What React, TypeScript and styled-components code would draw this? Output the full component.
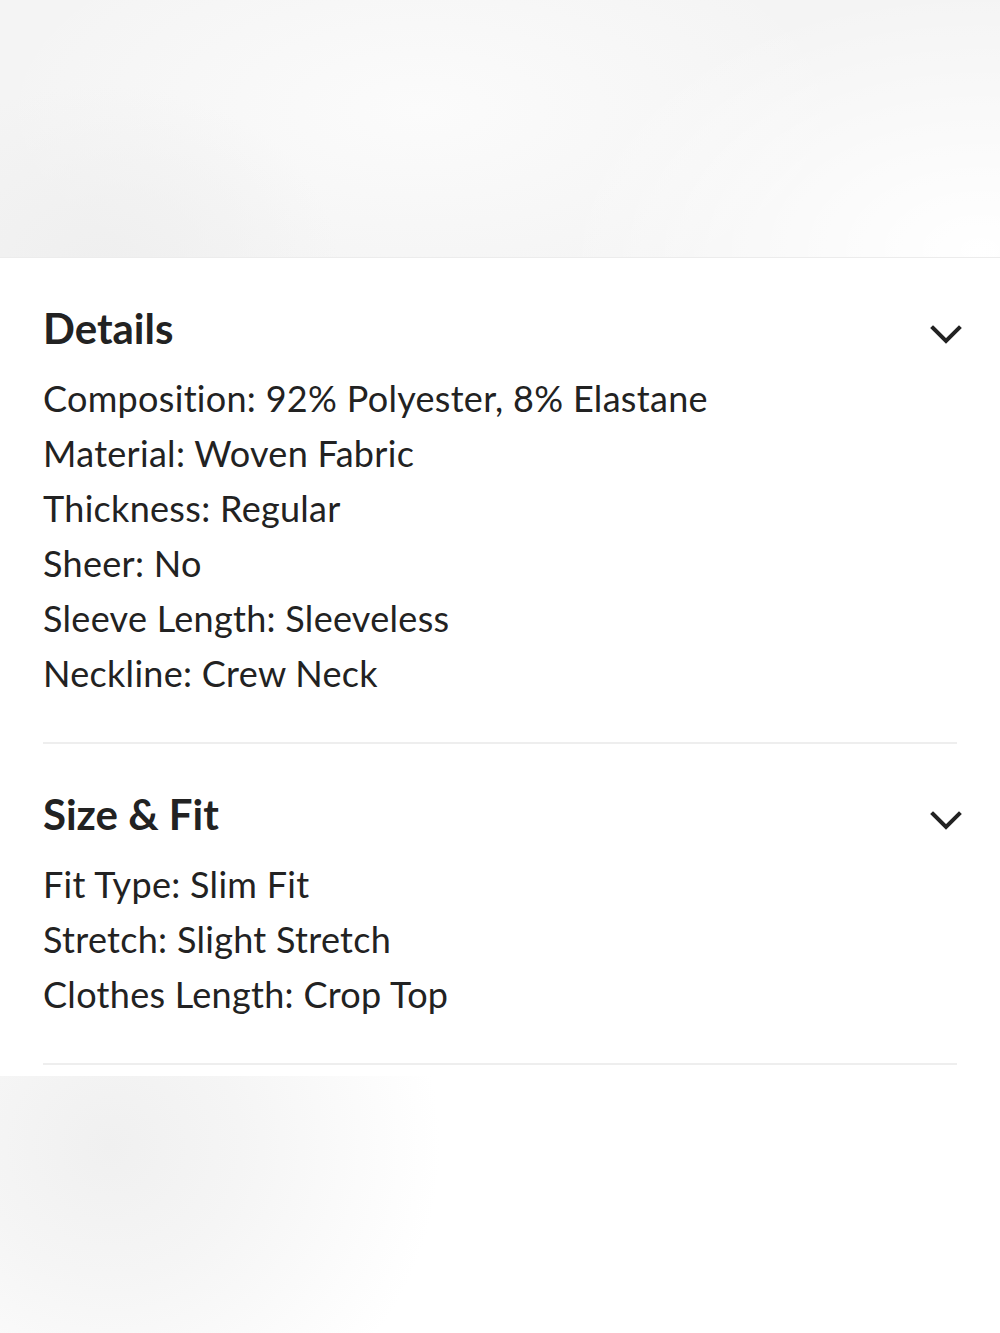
import * as React from "react";
import styled, { createGlobalStyle } from "styled-components";

const GlobalStyle = createGlobalStyle`
  html, body {
    margin: 0;
    padding: 0;
    background: #ffffff;
  }
  body {
    font-family: Lato, "Open Sans", Arial, sans-serif;
    color: #222222;
  }
`;

const SPage = styled.div`
  width: 1000px;
  height: 1333px;
  display: flex;
  flex-direction: column;
  overflow: hidden;
`;

const STopBackdrop = styled.div`
  height: 257px;
  border-bottom: 1px solid #ececec;
  background:
    radial-gradient(ellipse 240px 180px at 100px 265px, #efefef 0%, rgba(240, 240, 240, 0) 100%),
    radial-gradient(ellipse 420px 260px at 980px 250px, #ffffff 0%, rgba(255, 255, 255, 0) 100%),
    radial-gradient(ellipse 420px 200px at 420px 110px, #fbfbfb 0%, rgba(250, 250, 250, 0) 100%),
    #f4f4f4;
`;

const SPanel = styled.div`
  background: #ffffff;
  padding: 0 43px 11px;
`;

const SSection = styled.section`
  padding: 46px 0 41px;
  border-bottom: 2px solid #eeeeee;
`;

const SHeader = styled.div`
  display: flex;
  align-items: center;
  justify-content: space-between;
  height: 48px;
  margin-bottom: 19px;
`;

const STitle = styled.h2`
  margin: 0;
  font-size: 42px;
  font-weight: 700;
  line-height: 48px;
  color: #222222;
`;

const SChevron = styled.svg`
  width: 34px;
  height: 22px;
  margin-right: -6px;
  margin-top: 13px;
`;

const SList = styled.ul`
  list-style: none;
  margin: 0;
  padding: 0;
`;

const SItem = styled.li`
  font-size: 36px;
  line-height: 55px;
  letter-spacing: 0.3px;
  color: #222222;
`;

const SBottomBackdrop = styled.div`
  flex: 1;
  background:
    radial-gradient(ellipse 330px 320px at 110px 70px, #f0f0f0 0%, #f5f5f5 40%, rgba(255, 255, 255, 0) 100%),
    #ffffff;
`;

interface SectionProps {
  title: string;
  items: string[];
}

const Chevron = () => (
  <SChevron viewBox="0 0 34 22" fill="none">
    <path d="M4 4 L17 17 L30 4" stroke="#222222" strokeWidth="4" strokeLinecap="square" />
  </SChevron>
);

const Section = (props: SectionProps) => {
  const { title, items } = props;
  return (
    <SSection>
      <SHeader>
        <STitle>{title}</STitle>
        <Chevron />
      </SHeader>
      <SList>
        {items.map(item => (
          <SItem key={item}>{item}</SItem>
        ))}
      </SList>
    </SSection>
  );
};

const sections: SectionProps[] = [
  {
    title: "Details",
    items: [
      "Composition: 92% Polyester, 8% Elastane",
      "Material: Woven Fabric",
      "Thickness: Regular",
      "Sheer: No",
      "Sleeve Length: Sleeveless",
      "Neckline: Crew Neck",
    ],
  },
  {
    title: "Size & Fit",
    items: ["Fit Type: Slim Fit", "Stretch: Slight Stretch", "Clothes Length: Crop Top"],
  },
];

const App = () => (
  <SPage>
    <GlobalStyle />
    <STopBackdrop />
    <SPanel>
      {sections.map(s => (
        <Section key={s.title} {...s} />
      ))}
    </SPanel>
    <SBottomBackdrop />
  </SPage>
);

export default App;
